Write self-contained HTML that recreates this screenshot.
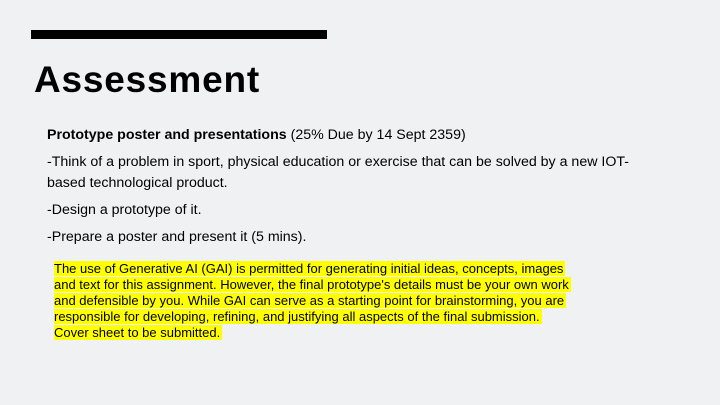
<!DOCTYPE html>
<html><head><style>
body{margin:0;width:720px;height:405px;background:#f0f1f3;font-family:"Liberation Sans",sans-serif;color:#000;position:relative;overflow:hidden}
.bar{position:absolute;left:31px;top:30px;width:296px;height:9px;background:#000}
h1{position:absolute;left:34px;top:59px;margin:0;font-size:37px;font-weight:bold;letter-spacing:0.8px}
.t{position:absolute;left:47px;font-size:14.2px;white-space:nowrap}
.h{position:absolute;left:54px;top:261px;font-size:13px;line-height:16px;white-space:nowrap}
.h span{background:#ffff00;padding:0 2px 0 0}
</style></head><body>
<div class="bar"></div>
<h1>Assessment</h1>
<div class="t" style="top:127px"><b>Prototype poster and presentations</b> (25% Due by 14 Sept 2359)</div>
<div class="t" style="top:154px">-Think of a problem in sport, physical education or exercise that can be solved by a new IOT-</div>
<div class="t" style="top:175px">based technological product.</div>
<div class="t" style="top:202px">-Design a prototype of it.</div>
<div class="t" style="top:229px">-Prepare a poster and present it (5 mins).</div>
<div class="h">
<span>The use of Generative AI (GAI) is permitted for generating initial ideas, concepts, images </span><br>
<span>and text for this assignment. However, the final prototype's details must be your own work </span><br>
<span>and defensible by you. While GAI can serve as a starting point for brainstorming, you are </span><br>
<span>responsible for developing, refining, and justifying all aspects of the final submission. </span><br>
<span>Cover sheet to be submitted.</span>
</div>
</body></html>
